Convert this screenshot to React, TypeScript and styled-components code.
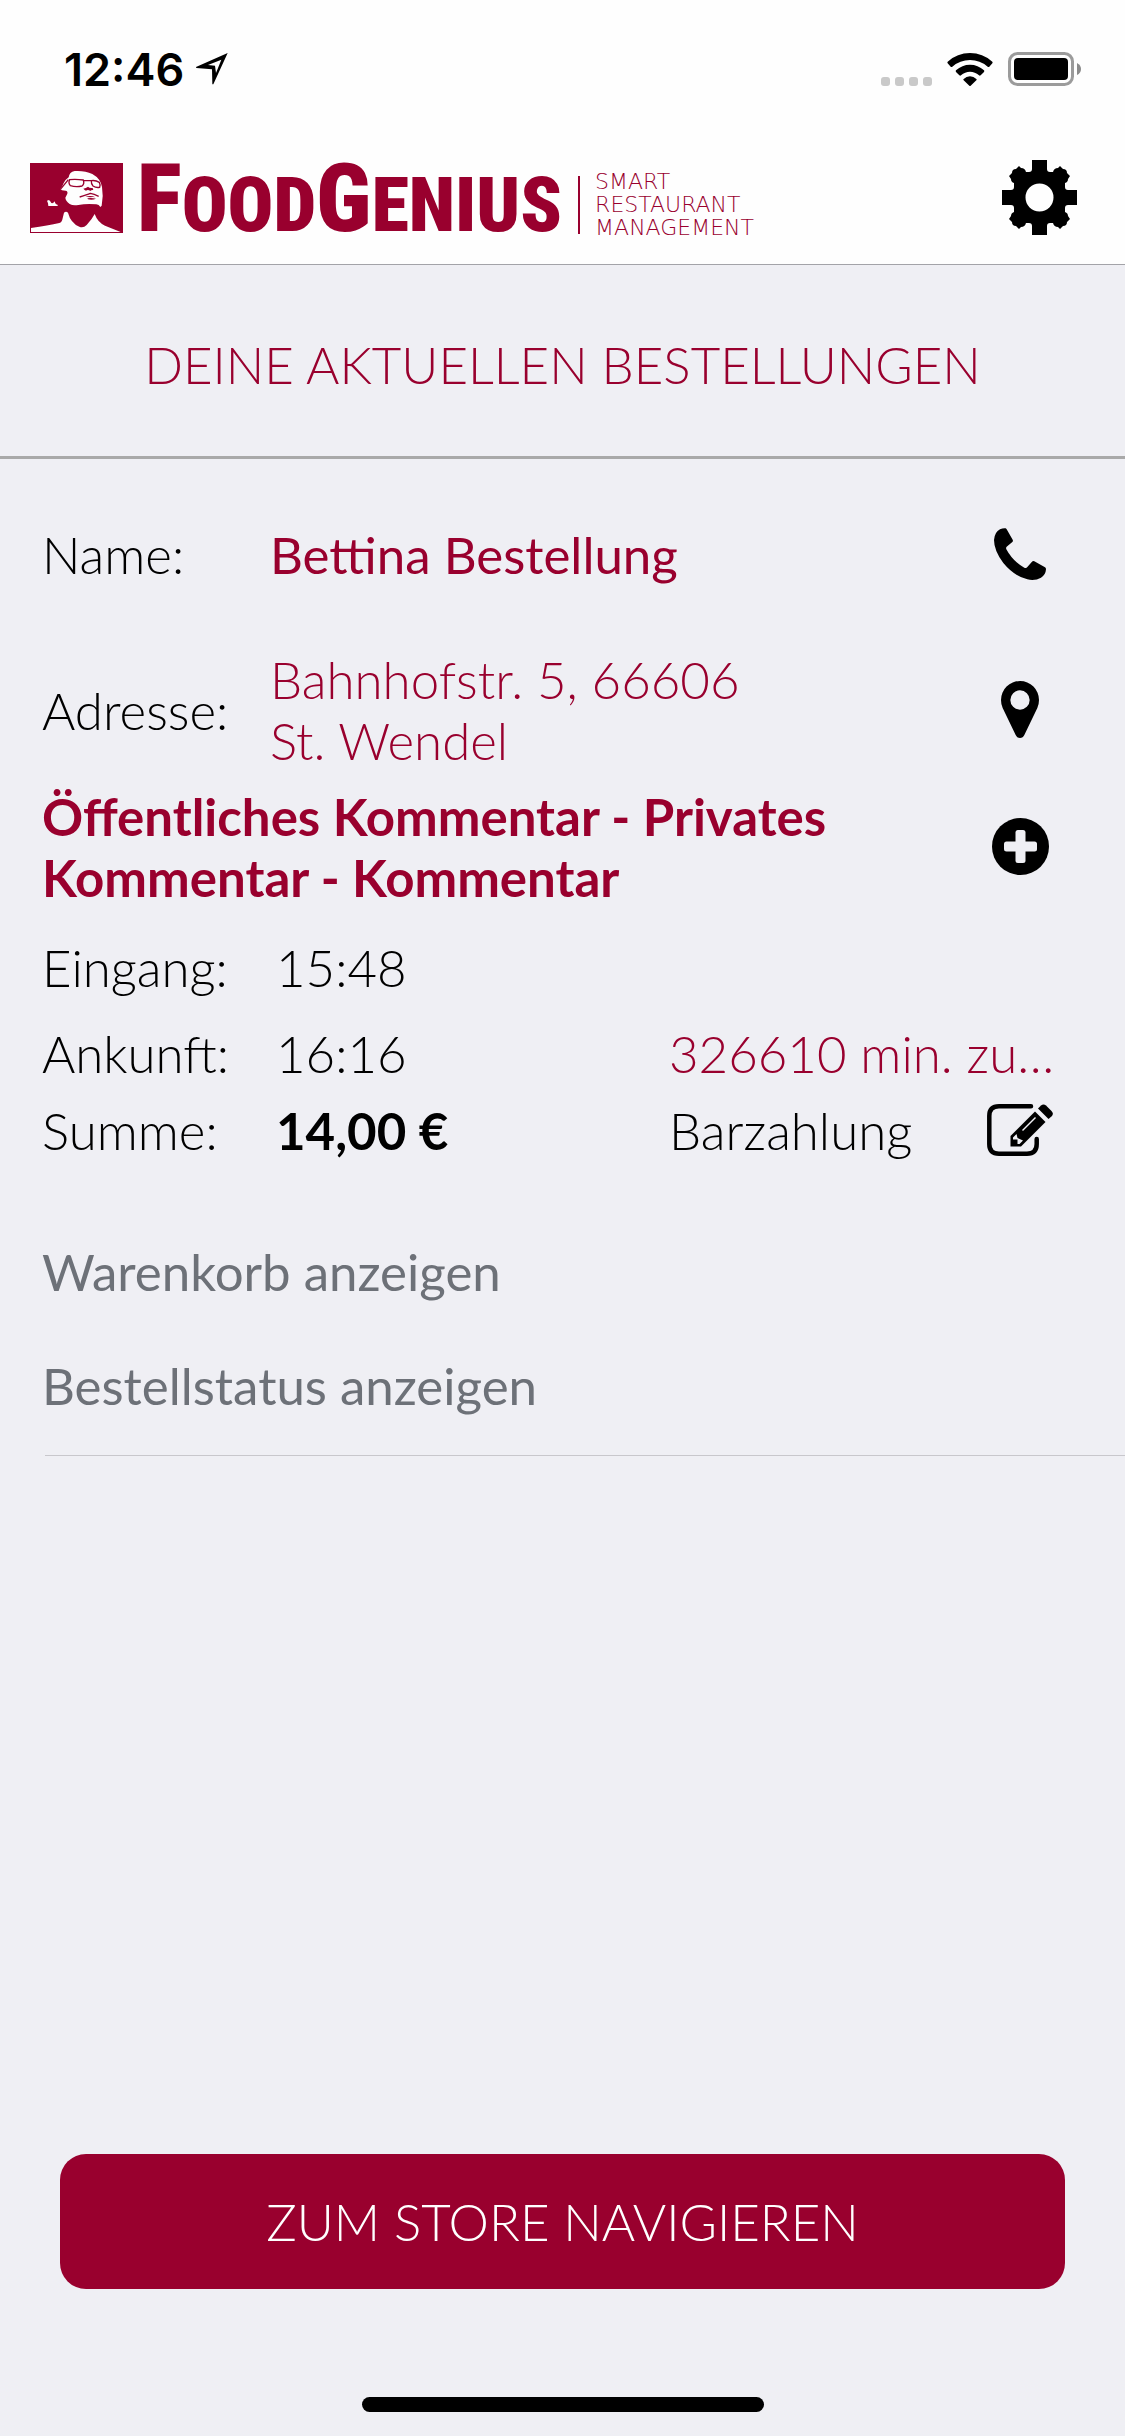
import React from "react";
import styled, { createGlobalStyle } from "styled-components";

const wine = "#99002e";
const ink = "#000000";

const GlobalStyle = createGlobalStyle`
  * { box-sizing: border-box; }
  body {
    margin: 0;
    background: #efeff4;
    color: ${ink};
    font-family: Lato, "Open Sans", sans-serif;
    font-size: 51px;
    line-height: 61px;
    font-weight: 300;
  }
  svg { display: block; }
`;

const Screen = styled.div`
  min-height: 100vh;
  display: flex;
  flex-direction: column;
`;

const StatusBar = styled.div`
  display: flex;
  align-items: center;
  justify-content: space-between;
  height: 132px;
  padding: 6px 44px 0 64px;
  background: #fefefe;
`;

const StatusGroup = styled.div<{ $gap: number }>`
  display: flex;
  align-items: center;
  gap: ${(p) => p.$gap}px;
`;

const Clock = styled.span`
  font-family: Inter, "Liberation Sans", sans-serif;
  font-size: 45px;
  font-weight: 600;
`;

const Header = styled.header`
  display: flex;
  align-items: center;
  justify-content: space-between;
  height: 133px;
  padding: 0 48px 0 30px;
  background: #fefefe;
  border-bottom: 1px solid #a3a3a8;
`;

const Logo = styled.div`
  display: flex;
  align-items: center;
  color: ${wine};
`;

const Wordmark = styled.span`
  margin-left: 14px;
  padding-top: 8px;
  font-family: "Roboto Condensed", "Liberation Sans Narrow", "Liberation Sans", sans-serif;
  font-size: 76px;
  line-height: 70px;
  font-weight: 900;
`;

const Initial = styled.span`
  font-size: 94px;
`;

const Tagline = styled.span`
  display: flex;
  flex-direction: column;
  margin-left: 16px;
  padding: 12px 0 0 17px;
  background: linear-gradient(${wine}, ${wine}) left 0 bottom 5px / 2px 58px no-repeat;
  font-family: "DejaVu Sans Light", "DejaVu Sans", sans-serif;
  font-size: 22px;
  line-height: 23px;
  font-weight: 200;
`;

const IconButton = styled.button`
  display: flex;
  align-items: center;
  justify-content: center;
  flex: none;
  min-width: 76px;
  padding: 0 0 2px;
  border: 0;
  background: none;
  color: inherit;
  cursor: pointer;
`;

const Title = styled.h1`
  margin: 0;
  padding: 69px 40px 61px;
  border-bottom: 3px solid #a9a9a9;
  color: ${wine};
  font: inherit;
  text-align: center;
`;

const Order = styled.main`
  display: flex;
  flex-direction: column;
  padding: 65px 67px 0 42px;
`;

const ContactRow = styled.div<{ $space?: number }>`
  display: grid;
  grid-template-columns: 228px 1fr 76px;
  align-items: center;
  margin-bottom: ${(p) => p.$space ?? 0}px;
`;

const Value = styled.span<{ $weight?: number }>`
  padding-right: 200px;
  color: ${wine};
  font-weight: ${(p) => p.$weight ?? 300};
`;

const CommentRow = styled.div`
  display: flex;
  align-items: center;
  justify-content: space-between;
  gap: 80px;
  margin-bottom: 29px;
`;

const Comment = styled.p`
  margin: 0;
  color: ${wine};
  font-weight: 700;
`;

const FactRow = styled.div<{ $space?: number }>`
  display: grid;
  grid-template-columns: 234px 393px 1fr;
  align-items: center;
  margin-bottom: ${(p) => p.$space ?? 0}px;
`;

const Sum = styled.strong`
  font-weight: 700;
`;

const Late = styled.span`
  color: ${wine};
  white-space: nowrap;
`;

const Payment = styled.span`
  display: flex;
  align-items: center;
  justify-content: space-between;
`;

const Links = styled.nav`
  display: flex;
  flex-direction: column;
  align-items: flex-start;
  gap: 53px;
  margin-left: 45px;
  padding: 80px 0 39px;
  border-bottom: 1px solid #c8c7cc;
`;

const TextLink = styled.a`
  margin-left: -3px;
  color: #6d7178;
  font-weight: 400;
  text-decoration: none;
`;

const Footer = styled.footer`
  display: flex;
  flex-direction: column;
  align-items: center;
  gap: 108px;
  margin-top: auto;
  padding: 60px 60px 24px;
`;

const PrimaryButton = styled.button`
  width: 100%;
  height: 135px;
  padding: 0;
  border: 0;
  border-radius: 26px;
  background: ${wine};
  color: #ffffff;
  font: inherit;
  cursor: pointer;
`;

const HomeIndicator = styled.div`
  width: 402px;
  height: 15px;
  border-radius: 8px;
  background: ${ink};
`;

const LocationArrow = () => (
  <svg width="32" height="32" viewBox="0 0 96 96" aria-hidden="true">
    <path fillRule="evenodd" d="M95 0 52 94 49 94 48 49 1 45 0 42ZM76 20 36 36 57 38 60 60Z" />
  </svg>
);

const SignalDots = () => (
  <svg width="51" height="33" viewBox="0 0 51 33" fill="#c9c9c9" aria-hidden="true">
    {[0, 14, 28, 42].map((x) => (
      <rect key={x} x={x} y="24" width="9" height="9" rx="3" />
    ))}
  </svg>
);

const Wifi = () => (
  <svg width="46" height="33" viewBox="0 0 138 99" aria-hidden="true">
    <path d="M2 26Q31 0 69 0T136 26Q138 29 136 31L127 41Q125 43 122 41Q99 21 69 21T16 41Q13 43 11 41L2 31Q0 29 2 26Z" />
    <path d="M27 52Q45 35 69 35T111 52Q113 54 111 57L101 67Q98 69 96 67Q84 56 69 56T42 67Q40 69 37 67L27 57Q25 54 27 52Z" />
    <path d="M50 78Q58 70 69 70T88 78Q90 80 88 82L71 98Q69 100 67 98L50 82Q48 80 50 78Z" />
  </svg>
);

const Battery = () => (
  <svg width="73" height="34" viewBox="0 0 73 34" aria-hidden="true">
    <rect x="1.5" y="1.5" width="63" height="31" rx="8" fill="none" stroke="#9b9b9b" strokeWidth="3" />
    <rect x="6" y="6" width="54" height="22" rx="4" />
    <path d="M69 11Q73 13 73 17T69 23Z" fill="#8b8b8b" />
  </svg>
);

const Portrait = () => (
  <svg width="93" height="70" viewBox="0 0 279 210" aria-hidden="true">
    <path fill={wine} d="M0 0H279V210H0Z" />
    <g fill="#fefefe">
      <path d="M116 43Q118 27 134 24Q164 22 187 33Q212 47 216 72Q221 100 215 128L211 132Q207 125 199 124Q170 121 145 126Q129 129 119 123Q107 114 106 104L112 92Q114 84 107 83L96 82L91 78Q98 70 101 60Q106 50 116 43Z" />
      <path d="M51 113 57 111Q62 115 64 120Q71 122 74 115Q75 124 84 126L82 129 55 129 54 121Z" />
      <path d="M3 195Q55 188 88 180Q96 178 98 166L102 149Q108 144 114 149Q122 180 148 191Q160 196 170 186Q186 169 194 153Q203 178 225 188L272 207H3Z" />
    </g>
    <g fill="none" stroke={wine} strokeWidth="4">
      <path d="M91 79Q104 64 115 50" />
      <path d="M119 50Q138 48 160 51Q164 63 156 69Q138 73 121 68Q114 60 119 50Z" />
      <path d="M160 53H184M184 53Q197 51 208 58Q212 66 209 73Q198 75 189 69Q183 62 184 53Z" />
      <path d="M149 102Q172 95 181 91Q192 93 206 100" />
    </g>
    <path fill={wine} d="M160 77Q168 76 174 71Q178 76 188 75L190 81Q184 80 181 84Q174 78 168 83Q164 82 160 77ZM166 101Q184 96 196 103Q188 101 181 103ZM172 106Q185 104 198 107Q187 112 174 109Z" />
  </svg>
);

const Gear = () => (
  <svg width="75" height="75" viewBox="0 0 75 75" aria-hidden="true">
    <path
      fillRule="evenodd"
      d="M30 0H45V9Q45 12 48 12H51Q52 8 56 8L58 6L61 9Q65 9 65 13L68 16L66 19Q66 22 63 23V27Q63 30 66 30H75V45H66Q63 45 63 48V52Q66 53 66 56L68 59L65 62Q65 66 61 66L58 69L56 67Q52 67 51 63H48Q45 63 45 66V75H30V66Q30 63 27 63H24Q23 67 19 67L17 69L14 66Q10 66 10 62L7 59L9 56Q9 53 12 52V48Q12 45 9 45H0V30H9Q12 30 12 27V23Q9 22 9 19L7 16L10 13Q10 9 14 9L17 6L19 8Q23 8 24 12H27Q30 12 30 9ZM37.5 23.5A14 14 0 1 0 37.5 51.5A14 14 0 1 0 37.5 23.5Z"
    />
  </svg>
);

const Phone = () => (
  <svg width="52" height="52" viewBox="0 0 156 156" aria-hidden="true">
    <path d="M18 4Q27 0 35 1Q37 2 38 4L56 35Q58 39 55 42L38 56Q35 59 37 64Q57 101 91 119Q97 121 100 117L114 101Q117 98 121 100L153 118Q156 120 156 124Q155 141 141 149Q123 159 100 154Q60 144 28 105Q0 68 0 36Q2 12 18 4Z" />
  </svg>
);

const Pin = () => (
  <svg width="38" height="57" viewBox="0 0 114 171" aria-hidden="true">
    <path
      fillRule="evenodd"
      d="M57 0A57 57 0 0 1 114 57Q114 70 109 81L70 162Q66 171 57 171T44 162L5 81Q0 70 0 57A57 57 0 0 1 57 0ZM57 28A29 29 0 1 0 57 86A29 29 0 1 0 57 28Z"
    />
  </svg>
);

const Plus = () => (
  <svg width="57" height="57" viewBox="0 0 57 57" aria-hidden="true">
    <circle cx="28.5" cy="28.5" r="28.5" />
    <g fill="#efeff4">
      <rect x="12" y="23.5" width="33" height="10" rx="2.5" />
      <rect x="23.5" y="12" width="10" height="33" rx="2.5" />
    </g>
  </svg>
);

const Edit = () => (
  <svg width="66" height="52" viewBox="0 0 66 52" aria-hidden="true">
    <path
      fill="none"
      stroke={ink}
      strokeWidth="4.5"
      strokeLinecap="round"
      d="M44 2.3H12Q2.3 2.3 2.3 12V40Q2.3 49.7 12 49.7H40Q49.7 49.7 49.7 40V35"
    />
    <path d="M48 7.5 58.5 18 34 42.5H23.5V32Z" />
    <path d="M51 4.5 54 1.5Q56.5-.5 59 1.5L64.5 7Q67 9.5 65 12L61.5 15Z" />
    <path fill="#efeff4" d="M26 33.5 29.5 30 30.5 34 36 36.5 32.5 40 30.5 40V35.5H26Z" />
    <path fill="none" stroke="#efeff4" strokeWidth="1.5" d="M35.5 26.5 48.5 13.5" />
  </svg>
);

export default function App() {
  return (
    <Screen>
      <GlobalStyle />
      <StatusBar>
        <StatusGroup $gap={12}>
          <Clock>12:46</Clock>
          <LocationArrow />
        </StatusGroup>
        <StatusGroup $gap={15}>
          <SignalDots />
          <Wifi />
          <Battery />
        </StatusGroup>
      </StatusBar>

      <Header>
        <Logo>
          <Portrait />
          <Wordmark>
            <Initial>F</Initial>OOD<Initial>G</Initial>ENIUS
          </Wordmark>
          <Tagline>
            <span>SMART</span>
            <span>RESTAURANT</span>
            <span>MANAGEMENT</span>
          </Tagline>
        </Logo>
        <IconButton aria-label="Einstellungen">
          <Gear />
        </IconButton>
      </Header>

      <Title>DEINE AKTUELLEN BESTELLUNGEN</Title>

      <Order>
        <ContactRow $space={64}>
          <span>Name:</span>
          <Value $weight={400}>Bettina Bestellung</Value>
          <IconButton aria-label="Anrufen">
            <Phone />
          </IconButton>
        </ContactRow>
        <ContactRow $space={15}>
          <span>Adresse:</span>
          <Value>Bahnhofstr. 5, 66606 St. Wendel</Value>
          <IconButton aria-label="Karte">
            <Pin />
          </IconButton>
        </ContactRow>
        <CommentRow>
          <Comment>Öffentliches Kommentar - Privates Kommentar - Kommentar</Comment>
          <IconButton aria-label="Mehr">
            <Plus />
          </IconButton>
        </CommentRow>
        <FactRow $space={25}>
          <span>Eingang:</span>
          <span>15:48</span>
        </FactRow>
        <FactRow $space={16}>
          <span>Ankunft:</span>
          <span>16:16</span>
          <Late>326610 min. zu…</Late>
        </FactRow>
        <FactRow>
          <span>Summe:</span>
          <Sum>14,00 €</Sum>
          <Payment>
            Barzahlung
            <IconButton aria-label="Zahlungsart bearbeiten">
              <Edit />
            </IconButton>
          </Payment>
        </FactRow>
      </Order>

      <Links>
        <TextLink href="#warenkorb">Warenkorb anzeigen</TextLink>
        <TextLink href="#bestellstatus">Bestellstatus anzeigen</TextLink>
      </Links>

      <Footer>
        <PrimaryButton>ZUM STORE NAVIGIEREN</PrimaryButton>
        <HomeIndicator />
      </Footer>
    </Screen>
  );
}
